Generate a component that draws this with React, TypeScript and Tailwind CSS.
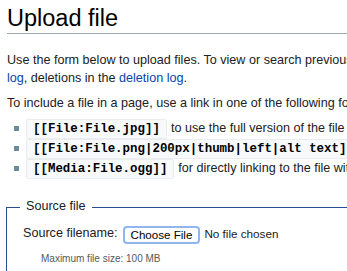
import React from 'react';

const codeBox =
  'inline-block bg-[#f8f9fa] border border-[#eaecf0] rounded-[2px] px-[6px] leading-[18px] text-[12.45px] font-bold text-black font-["Liberation_Mono",monospace]';

const Bullet: React.FC = () => (
  <span className="w-[5px] h-[5px] bg-[#6b8b9b] shrink-0 mr-[7px]" />
);

const App: React.FC = () => {
  return (
    <div className="w-[347px] h-[271px] overflow-hidden bg-white text-[#202122] font-['Liberation_Sans',Arial,sans-serif]">
      <div className="w-[460px] pl-[7px]">
        <h1 className="text-[23.5px] leading-[29px] pt-[4px] border-b border-[#a2a9b1] text-black">
          Upload file
        </h1>

        <p className="mt-[18px] text-[12.6px] leading-[17.5px] whitespace-nowrap">
          Use the form below to upload files. To view or search previously uploaded files go to the list of uploaded files, uploads are also logged in the upload
          <br />
          <a className="text-[#0645ad]">log</a>, deletions in the <a className="text-[#0645ad]">deletion log</a>.
        </p>

        <p className="mt-[8px] text-[12.6px] leading-[17.5px] whitespace-nowrap">
          To include a file in a page, use a link in one of the following forms:
        </p>

        <ul className="mt-[6px] pl-[7px] text-[12.6px] whitespace-nowrap">
          <li className="flex items-center h-[20px]">
            <Bullet />
            <code className={codeBox}>[[File:File.jpg]]</code>
            <span className="ml-[4px]">to use the full version of the file</span>
          </li>
          <li className="flex items-center h-[20px]">
            <Bullet />
            <code className={codeBox}>[[File:File.png|200px|thumb|left|alt text]]</code>
            <span className="ml-[4px]">to use a 200 pixel wide rendition</span>
          </li>
          <li className="flex items-center h-[20px]">
            <Bullet />
            <code className={codeBox}>[[Media:File.ogg]]</code>
            <span className="ml-[4px]">for directly linking to the file without displaying the file</span>
          </li>
        </ul>

        <fieldset className="-ml-px mt-[19px] border border-[#2a4b8d] pl-[16px] pb-[40px] text-[12.6px]">
          <legend className="-ml-[3px] px-[6px] leading-[17.5px] pb-[3px]">Source file</legend>
          <div className="mt-[5px] flex items-center h-[20px] whitespace-nowrap">
            <span>Source filename:</span>
            <button className="ml-[5px] mt-[3px] h-[18px] px-[6px] bg-white border-2 border-[#8fb6ef] rounded-[4px] text-[11.6px] leading-[14px] text-black font-['Liberation_Sans',Arial,sans-serif]">
              Choose File
            </button>
            <span className="ml-[4px] text-[11.7px] mt-[2px]">No file chosen</span>
          </div>
          <div className="ml-[18px] mt-[9px] text-[10px] leading-[14px] text-[#54595d]">
            Maximum file size: 100 MB
          </div>
        </fieldset>
      </div>
    </div>
  );
};

export default App;
